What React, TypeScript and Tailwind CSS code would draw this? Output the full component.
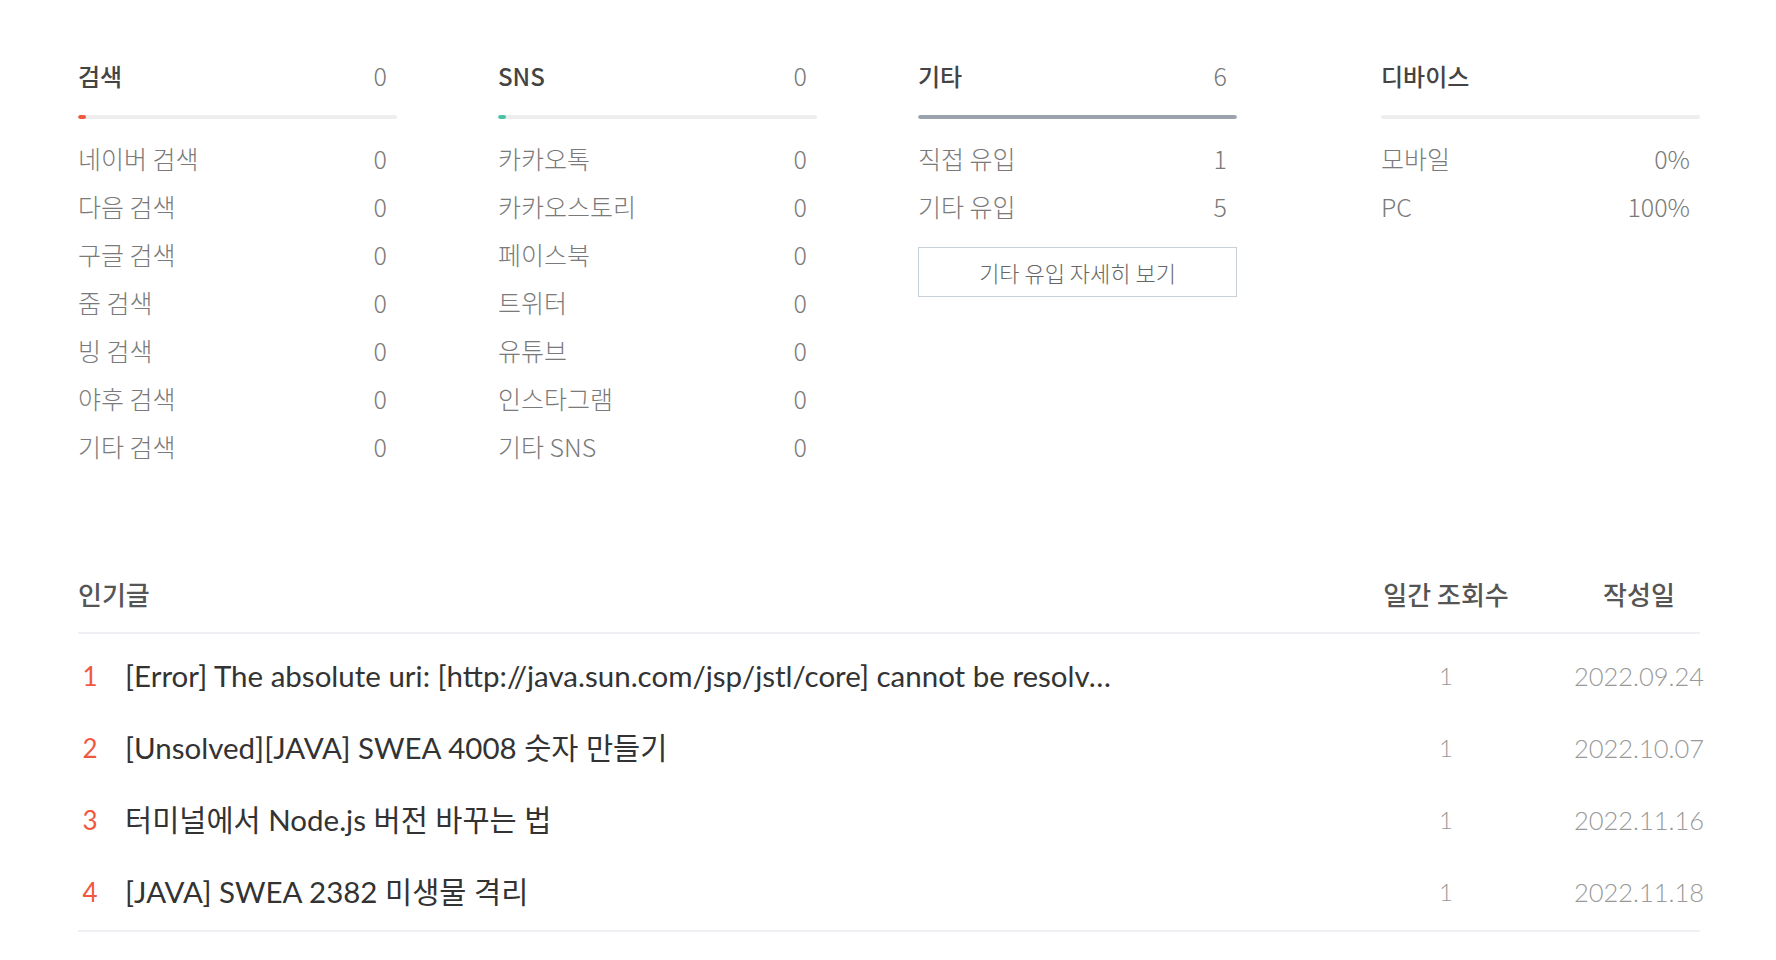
import React from 'react';

const topFont = "font-['Noto_Sans_CJK_KR','Noto_Sans',sans-serif]";

type Row = { label: string; value: string };

const search: Row[] = [
    { label: '네이버 검색', value: '0' },
    { label: '다음 검색', value: '0' },
    { label: '구글 검색', value: '0' },
    { label: '줌 검색', value: '0' },
    { label: '빙 검색', value: '0' },
    { label: '야후 검색', value: '0' },
    { label: '기타 검색', value: '0' },
];

const sns: Row[] = [
    { label: '카카오톡', value: '0' },
    { label: '카카오스토리', value: '0' },
    { label: '페이스북', value: '0' },
    { label: '트위터', value: '0' },
    { label: '유튜브', value: '0' },
    { label: '인스타그램', value: '0' },
    { label: '기타 SNS', value: '0' },
];

const etc: Row[] = [
    { label: '직접 유입', value: '1' },
    { label: '기타 유입', value: '5' },
];

const device: Row[] = [
    { label: '모바일', value: '0%' },
    { label: 'PC', value: '100%' },
];

const posts = [
    { title: '[Error] The absolute uri: [http://java.sun.com/jsp/jstl/core] cannot be resolv…', views: 1, date: '2022.09.24' },
    { title: '[Unsolved][JAVA] SWEA 4008 숫자 만들기', views: 1, date: '2022.10.07' },
    { title: '터미널에서 Node.js 버전 바꾸는 법', views: 1, date: '2022.11.16' },
    { title: '[JAVA] SWEA 2382 미생물 격리', views: 1, date: '2022.11.18' },
];

const Column = ({
    title,
    total,
    bar,
    rows,
    children,
}: {
    title: string;
    total?: string;
    bar: React.ReactNode;
    rows: Row[];
    children?: React.ReactNode;
}) => (
    <div className="w-[319px] shrink-0">
        <div className="flex items-center justify-between h-10 pr-[10px]">
            <span className="text-[24px] font-medium text-[#444]">{title}</span>
            {total && <span className="text-[25px] font-light text-[#777]">{total}</span>}
        </div>
        <div className="mt-[19px] h-1 w-full rounded-full bg-[#eeeeee] overflow-hidden">{bar}</div>
        <div className="mt-[16px]">
            {rows.map((r) => (
                <div key={r.label} className="flex items-center justify-between h-12 pr-[10px] text-[25px] font-light text-[#7a7a7a]">
                    <span>{r.label}</span>
                    <span>{r.value}</span>
                </div>
            ))}
        </div>
        {children}
    </div>
);

export default function App() {
    return (
        <div className="min-h-screen bg-white pl-[78px] pr-[76px] pt-[56px]">
            {/* Inflow stats */}
            <div className={`flex ${topFont}`}>
                <div className="flex gap-[101px]">
                    <Column title="검색" total="0" rows={search} bar={<div className="h-full w-2 rounded-full bg-[#f0583f]" />} />
                    <Column title="SNS" total="0" rows={sns} bar={<div className="h-full w-2 rounded-full bg-[#4cc3a5]" />} />
                    <Column title="기타" total="6" rows={etc} bar={<div className="h-full w-full rounded-full bg-[#9ba3ac]" />}>
                        <button className="mt-4 h-[50px] w-full border-[1.5px] border-[#c9d0da] bg-white text-[22px] font-light text-[#666]">
                            기타 유입 자세히 보기
                        </button>
                    </Column>
                </div>
                <div className="ml-auto">
                    <Column title="디바이스" rows={device} bar={null} />
                </div>
            </div>

            {/* Popular posts */}
            <div className="mt-[102px] font-[Lato,'Noto_Sans_CJK_KR',sans-serif]">
                <div className={`flex items-center h-10 text-[26px] font-medium text-[#555] ${topFont}`}>
                    <span className="flex-1">인기글</span>
                    <span className="w-[160px] text-center">일간 조회수</span>
                    <span className="ml-[52px] w-[122px] text-center">작성일</span>
                </div>
                <div className="mt-[19px] h-[2px] bg-[#eef0f4]" />
                <div className="pt-[6px] pb-[2px]">
                    {posts.map((p, i) => (
                        <div key={i} className="flex items-center h-[72px]">
                            <div className="flex flex-1 min-w-0 items-center">
                                <span className="w-6 shrink-0 text-center text-[26px] text-[#f0583f]">{i + 1}</span>
                                <span className="ml-[23px] whitespace-nowrap text-[29.5px] text-[#333]">{p.title}</span>
                            </div>
                            <span className="w-[160px] text-center text-[24px] font-light text-[#999]">{p.views}</span>
                            <span className="ml-[52px] flex w-[122px] justify-center whitespace-nowrap text-[25.5px] font-light text-[#999]">
                                {p.date}
                            </span>
                        </div>
                    ))}
                </div>
                <div className="h-[2px] bg-[#eef0f4]" />
            </div>
        </div>
    );
}
